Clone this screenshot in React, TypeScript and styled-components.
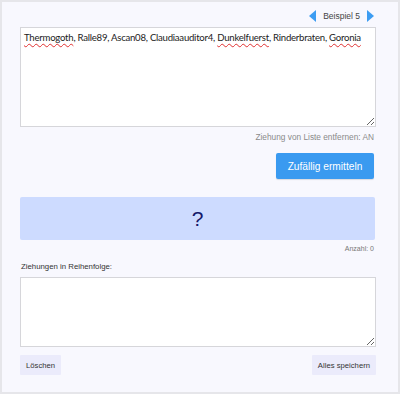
import * as React from "react";
import styled, { createGlobalStyle } from "styled-components";

const GlobalStyle = createGlobalStyle`
  html, body {
    margin: 0;
    padding: 0;
    background: #ffffff;
  }
`;

const names = [
  { text: "Thermogoth", typo: true },
  { text: "Ralle89", typo: false },
  { text: "Ascan08", typo: false },
  { text: "Claudiaauditor4", typo: false },
  { text: "Dunkelfuerst", typo: true },
  { text: "Rinderbraten", typo: false },
  { text: "Goronia", typo: true },
];

const App = () => {
  const [count] = React.useState(0);

  return (
    <>
      <GlobalStyle />
      <Frame>
        <Pager>
          <Arrow dir="left" />
          <PagerLabel>Beispiel 5</PagerLabel>
          <Arrow dir="right" />
        </Pager>

        <Field height={100}>
          {names.map((n, i) => (
            <React.Fragment key={n.text}>
              {n.typo ? <Typo>{n.text}</Typo> : n.text}
              {i < names.length - 1 ? ", " : ""}
            </React.Fragment>
          ))}
        </Field>

        <Hint>Ziehung von Liste entfernen: AN</Hint>

        <ActionRow>
          <PrimaryButton>Zufällig ermitteln</PrimaryButton>
        </ActionRow>

        <ResultBox>?</ResultBox>
        <Count>Anzahl: {count}</Count>

        <Label>Ziehungen in Reihenfolge:</Label>
        <Field height={70} />

        <FooterRow>
          <SmallButton>Löschen</SmallButton>
          <SmallButton>Alles speichern</SmallButton>
        </FooterRow>
      </Frame>
    </>
  );
};

export default App;

const Arrow = ({ dir }: { dir: "left" | "right" }) => (
  <svg width="7" height="12" viewBox="0 0 7 12">
    {dir === "left" ? (
      <path d="M7 0 L0 6 L7 12 Z" fill="#3d9df2" />
    ) : (
      <path d="M0 0 L7 6 L0 12 Z" fill="#3d9df2" />
    )}
  </svg>
);

const Frame = styled.div`
  box-sizing: border-box;
  width: 400px;
  height: 394px;
  border: 2px solid #e6e6ea;
  background: #f8f8fe;
  padding: 7px 22px 0 18px;
  display: flex;
  flex-direction: column;
  font-family: "Liberation Sans", Arial, sans-serif;
  color: #333;
`;

const Pager = styled.div`
  display: flex;
  align-items: center;
  justify-content: flex-end;
  gap: 7px;
  height: 14px;
  margin-bottom: 4px;
  padding-right: 2px;
`;

const PagerLabel = styled.span`
  font-size: 8.5px;
  color: #444;
`;

const Field = styled.div<{ height: number }>`
  box-sizing: border-box;
  height: ${(p) => p.height}px;
  background: #fff;
  border: 1px solid #d6d6da;
  padding: 3px 3px;
  font-family: Lato, "Segoe UI", sans-serif;
  font-size: 9.6px;
  letter-spacing: -0.25px;
  line-height: 14px;
  color: #222;
  resize: vertical;
  overflow: auto;
`;

const Typo = styled.span`
  text-decoration: underline wavy #e03030;
  text-decoration-thickness: 1px;
  text-underline-offset: 2px;
`;

const Hint = styled.div`
  text-align: right;
  font-size: 8.3px;
  color: #8a8a8a;
  margin-top: 5px;
  padding-right: 2px;
`;

const ActionRow = styled.div`
  display: flex;
  justify-content: flex-end;
  margin-top: 11px;
  padding-right: 2px;
`;

const PrimaryButton = styled.button`
  box-sizing: border-box;
  width: 98px;
  height: 26px;
  border: none;
  border-radius: 2px;
  background: #3a9af0;
  color: #fff;
  font-family: "Liberation Sans", Arial, sans-serif;
  font-size: 10.2px;
  padding: 0;
  box-shadow: 0 1px 1px rgba(0, 0, 0, 0.12);
`;

const ResultBox = styled.div`
  box-sizing: border-box;
  height: 43px;
  margin-top: 18px;
  margin-right: 1px;
  border-radius: 2px;
  background: #cddbff;
  color: #14186a;
  font-family: "Liberation Sans", Arial, sans-serif;
  font-size: 21px;
  display: flex;
  align-items: center;
  justify-content: center;
`;

const Count = styled.div`
  text-align: right;
  font-size: 7px;
  color: #777;
  margin-top: 5px;
  padding-right: 2px;
`;

const Label = styled.div`
  font-size: 7.8px;
  color: #333;
  margin-top: 10px;
  margin-bottom: 6px;
  padding-left: 1px;
`;

const FooterRow = styled.div`
  display: flex;
  justify-content: space-between;
  margin-top: 8px;
`;

const SmallButton = styled.button`
  box-sizing: border-box;
  height: 20px;
  padding: 0 6px;
  border: none;
  border-radius: 1px;
  background: #ebebfb;
  color: #333;
  font-family: "Liberation Sans", Arial, sans-serif;
  font-size: 7.7px;
`;
